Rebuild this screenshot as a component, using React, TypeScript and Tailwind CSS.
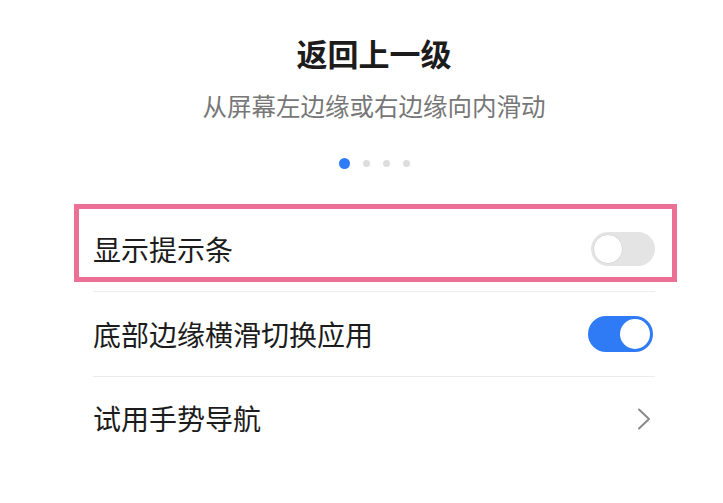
import React from "react";

const font = { fontFamily: '"Noto Sans CJK SC", "Noto Sans", sans-serif' };

const Toggle = ({ on }: { on: boolean }) =>
    on ? (
        <div className="w-[65px] h-[36px] rounded-full bg-[#2f7bf5] flex items-center justify-end pr-[3px]">
            <div className="w-[30px] h-[30px] rounded-full bg-white" />
        </div>
    ) : (
        <div className="w-[64px] h-[34px] rounded-full bg-[#e4e4e4] flex items-center pl-[2px]">
            <div className="w-[30px] h-[30px] rounded-full bg-white border border-[#d8d8d8]" />
        </div>
    );

const Chevron = () => (
    <svg width="14" height="22" viewBox="0 0 14 22" fill="none">
        <polyline
            points="2,1.5 12,11 2,20.5"
            stroke="#8a8a8a"
            strokeWidth="2"
            strokeLinecap="round"
            strokeLinejoin="round"
        />
    </svg>
);

export default function App() {
    return (
        <div className="w-[723px] h-[503px] bg-white text-[#1c1c1c]" style={font}>
            <div className="pt-[33px]">
                <div className="pl-[25px]">
                    <h1 className="text-[31px] leading-[40px] font-bold text-center">返回上一级</h1>
                    <p className="mt-[17px] text-[24.5px] leading-[32px] text-center text-[#777]">
                        从屏幕左边缘或右边缘向内滑动
                    </p>
                    <div className="mt-[36px] h-[11px] flex items-center justify-center gap-[13px]">
                        <span className="w-[11px] h-[11px] rounded-full bg-[#2f7bf5]" />
                        <span className="w-[7px] h-[7px] rounded-full bg-[#dddddd]" />
                        <span className="w-[7px] h-[7px] rounded-full bg-[#dddddd]" />
                        <span className="w-[7px] h-[7px] rounded-full bg-[#dddddd]" />
                    </div>
                </div>

                <div className="mt-[38px] ml-[93px] w-[562px]">
                    <div className="relative h-[85px] border-b border-[#ececec] flex items-center justify-between">
                        <span className="text-[28px]">显示提示条</span>
                        <Toggle on={false} />
                        <div className="absolute left-[-19px] right-[-22px] top-[-3px] h-[78px] border-[5px] border-[#ec7096]" />
                    </div>
                    <div className="h-[85px] border-b border-[#ececec] flex items-center justify-between">
                        <span className="text-[28px]">底部边缘横滑切换应用</span>
                        <div className="mr-[2px]">
                            <Toggle on={true} />
                        </div>
                    </div>
                    <div className="h-[85px] flex items-center justify-between">
                        <span className="text-[28px] -mt-[3px]">试用手势导航</span>
                        <div className="mr-[4px] -mt-[2px]">
                            <Chevron />
                        </div>
                    </div>
                </div>
            </div>
        </div>
    );
}
